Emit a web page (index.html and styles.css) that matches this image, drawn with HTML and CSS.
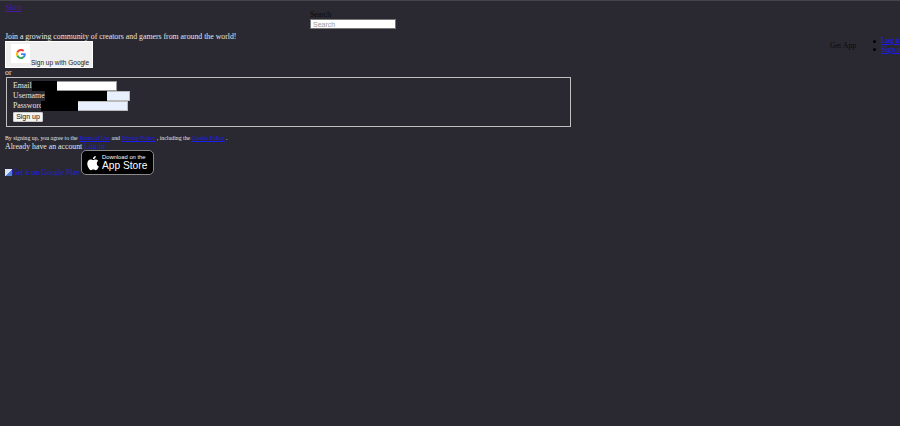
FILE: index.html
```html
<!DOCTYPE html>
<html lang="en">
<head>
  <meta charset="UTF-8">
  <title>Skrit</title>
  <link rel="stylesheet" href="styles.css">
</head>
<body>

  <div class="page">
    <div class="main">
      <!-- Header -->
      <div class="header">
        <a class="brand" href="#">Skrit</a>
        <div class="search">
          <label class="search-label" for="search">Search</label>
          <input class="search-input" id="search" type="text" placeholder="Search">
        </div>
      </div>

      <div class="intro">Join a growing community of creators and gamers from around the world!</div>

      <button class="google-btn">
        <span class="google-icon">
          <svg viewBox="0 0 48 48" width="10" height="10">
            <path fill="#ea4335" d="M24 9.500c3.500 0 6.700 1.200 9.200 3.600l6.900-6.900C35.900 2.400 30.500 0 24 0 14.600 0 6.500 5.400 2.600 13.200l8 6.200C12.500 13.700 17.800 9.500 24 9.500z"/>
            <path fill="#4285f4" d="M47 24.500c0-1.600-.1-3.100-.4-4.500H24v9h12.900c-.6 3-2.200 5.500-4.700 7.200l7.700 6C44.400 38.100 47 31.900 47 24.500z"/>
            <path fill="#fbbc05" d="M10.600 28.600c-.5-1.400-.8-3-.8-4.600s.3-3.200.8-4.600l-8-6.200C.9 16.500 0 20.100 0 24s.9 7.500 2.600 10.800l8-6.200z"/>
            <path fill="#34a853" d="M24 48c6.500 0 11.900-2.100 15.900-5.800l-7.700-6c-2.200 1.400-4.900 2.300-8.200 2.300-6.200 0-11.500-4.200-13.400-9.900l-8 6.200C6.500 42.600 14.600 48 24 48z"/>
          </svg>
        </span>
        <span class="google-text">Sign up with Google</span>
      </button>

      <div class="or">or</div>

      <form class="signup">
        <div class="field">
          <label>Email</label>
          <span class="input-wrap">
            <input class="input-email" type="text">
            <span class="redact redact-email"></span>
          </span>
        </div>
        <div class="field">
          <label>Username</label>
          <span class="input-wrap">
            <input class="input-user autofill" type="text">
            <span class="redact redact-user"></span>
          </span>
        </div>
        <div class="field">
          <label>Password</label>
          <span class="input-wrap input-wrap-pass">
            <input class="input-pass autofill" type="text">
            <span class="redact redact-pass"></span>
          </span>
        </div>
        <button class="submit" type="button">Sign up</button>
      </form>

      <div class="terms">
        By signing up, you agree to the <a href="#">Terms of Use</a> and <a href="#">Privacy Policy</a> , including the <a href="#">Cookie Policy</a> .
      </div>
      <div class="login">Already have an account <a href="#">Log in</a></div>

      <div class="stores">
        <a class="play" href="#"><span class="broken"></span>Get it on Google Play</a>
        <a class="appstore" href="#">
          <svg viewBox="0 0 24 24" width="18" height="18">
            <path fill="#fff" d="M17.050 12.500c0-2.300 1.900-3.400 2-3.500-1.100-1.600-2.800-1.800-3.400-1.800-1.400-.1-2.800.9-3.500.9-.7 0-1.900-.9-3.100-.8-1.600 0-3.100.9-3.900 2.300-1.700 2.900-.4 7.200 1.200 9.500.8 1.100 1.700 2.400 3 2.400 1.200 0 1.700-.8 3.100-.8 1.500 0 1.900.8 3.100.8 1.300 0 2.100-1.100 2.900-2.300.9-1.300 1.300-2.600 1.300-2.700-.1 0-2.700-1-2.700-4zM14.700 5.500c.6-.8 1.100-1.900 1-3-1 0-2.100.7-2.800 1.400-.6.700-1.100 1.800-1 2.900 1.100.1 2.200-.5 2.800-1.300z"/>
          </svg>
          <span class="appstore-text">
            <span class="appstore-small">Download on the</span>
            <span class="appstore-big">App Store</span>
          </span>
        </a>
      </div>
    </div>

    <!-- Right side -->
    <div class="side">
      <span class="get-app">Get App</span>
      <ul class="side-links">
        <li><a href="#">Log in</a></li>
        <li><a href="#">Sign up</a></li>
      </ul>
    </div>
  </div>

</body>
</html>
```

FILE: styles.css
```css
* {
  box-sizing: border-box;
}

body {
  margin: 0;
  min-height: 426px;
  background: #2a2831;
  border-top: 1px solid #45434c;
  color: #e6e6e6;
  font-family: 'Liberation Serif', serif;
  font-size: 7.800px;
  line-height: 10px;
  overflow: hidden;
}

a {
  color: #1c1cf0;
}

.page {
  display: flex;
  padding-left: 5px;
}

.main {
  width: 566px;
  flex: none;
}

.header {
  display: flex;
  height: 31px;
}

.brand {
  color: #4b1a9e;
  width: 305px;
  margin-top: 1px;
  font-size: 8.500px;
}

.search {
  display: flex;
  flex-direction: column;
  margin-top: 9px;
}

.search-label {
  color: #0c0c0c;
  line-height: 9px;
}

.search-input {
  width: 86px;
  height: 10px;
  padding: 0 2px;
  border: 1px solid #777;
  border-radius: 0;
  background: #fff;
  font-family: 'Liberation Sans', sans-serif;
  font-size: 7px;
  outline: none;
}

.search-input::placeholder {
  color: #9a9a9a;
}

.intro {
  height: 9px;
  line-height: 9px;
}

.google-btn {
  display: flex;
  width: 88px;
  height: 27px;
  margin: 0;
  padding: 2px 5px;
  border: 1px solid #fff;
  background: #efefef;
  color: #222;
  font-family: 'Liberation Sans', sans-serif;
  font-size: 6.500px;
}

.google-icon {
  display: flex;
  flex: none;
  align-items: center;
  justify-content: center;
  width: 19px;
  height: 19px;
  background: #fff;
}

.google-text {
  align-self: flex-end;
  margin: 0 0 -2px 1px;
  line-height: 8px;
  white-space: nowrap;
}

.or {
  height: 9px;
  line-height: 9px;
}

.signup {
  display: flex;
  flex-direction: column;
  align-items: flex-start;
  width: 565px;
  height: 50px;
  margin: 0 0 0 1px;
  padding: 3px 6px;
  border: 1px solid #c0c0c0;
}

.field {
  display: flex;
  align-items: center;
  height: 10px;
}

.input-wrap {
  position: relative;
  display: block;
  height: 10px;
}

.input-wrap-pass {
  margin-left: -2px;
}

.input-wrap input {
  display: block;
  height: 10px;
  padding: 0;
  border: 1px solid #999;
  background: #fff;
}

.input-email {
  width: 85px;
}

.input-user {
  width: 85px;
}

.input-pass {
  width: 87px;
}

.input-wrap .autofill {
  border-color: #bbb;
  background: #e8f0fe;
}

.redact {
  position: absolute;
  top: 0;
  left: 0;
  height: 100%;
  background: #000;
}

.redact-email {
  width: 25px;
}

.redact-user {
  width: 62px;
}

.redact-pass {
  width: 37px;
}

.submit {
  width: 30px;
  height: 10px;
  margin: 1px 0 0;
  padding: 0;
  border: 1px solid #ccc;
  border-radius: 1px;
  background: #f5f5f5;
  color: #111;
  font-family: 'Liberation Sans', sans-serif;
  font-size: 7px;
  line-height: 8px;
}

.terms {
  margin-top: 7px;
  font-size: 5.800px;
  line-height: 8px;
}

.login {
  height: 9px;
  line-height: 9px;
}

.stores {
  display: flex;
  height: 25px;
  margin-top: -1px;
}

.play {
  display: flex;
  flex: none;
  align-items: flex-end;
  align-self: flex-end;
  width: 76px;
  height: 21px;
  margin-bottom: -1px;
  line-height: 7px;
  white-space: nowrap;
  overflow: hidden;
}

.broken {
  flex: none;
  width: 7px;
  height: 7px;
  background: linear-gradient(135deg, #d8e4f8 50%, #4f7fd6 50%);
}

.appstore {
  display: flex;
  align-items: center;
  width: 73px;
  height: 25px;
  padding-left: 2px;
  border: 1px solid #8a8a8a;
  border-radius: 5px;
  background: #000;
  color: #fff;
  font-family: 'Liberation Sans', sans-serif;
  text-decoration: none;
}

.appstore-text {
  display: flex;
  flex-direction: column;
}

.appstore-small {
  font-size: 5.800px;
  line-height: 6px;
  white-space: nowrap;
}

.appstore-big {
  font-size: 10.200px;
  line-height: 11px;
  white-space: nowrap;
}

.side {
  display: flex;
  flex: none;
  align-items: center;
  height: 17px;
  margin: 36px 0 0 259px;
  color: #0c0c0c;
}

.get-app {
  width: 43px;
}

.side-links {
  margin: 0;
  padding: 0;
  line-height: 8.500px;
  list-style: none;
  white-space: nowrap;
}

.side-links li {
  display: flex;
  align-items: center;
  gap: 5px;
}

.side-links li::before {
  content: "";
  width: 3px;
  height: 3px;
  border-radius: 50%;
  background: #000;
}
```
